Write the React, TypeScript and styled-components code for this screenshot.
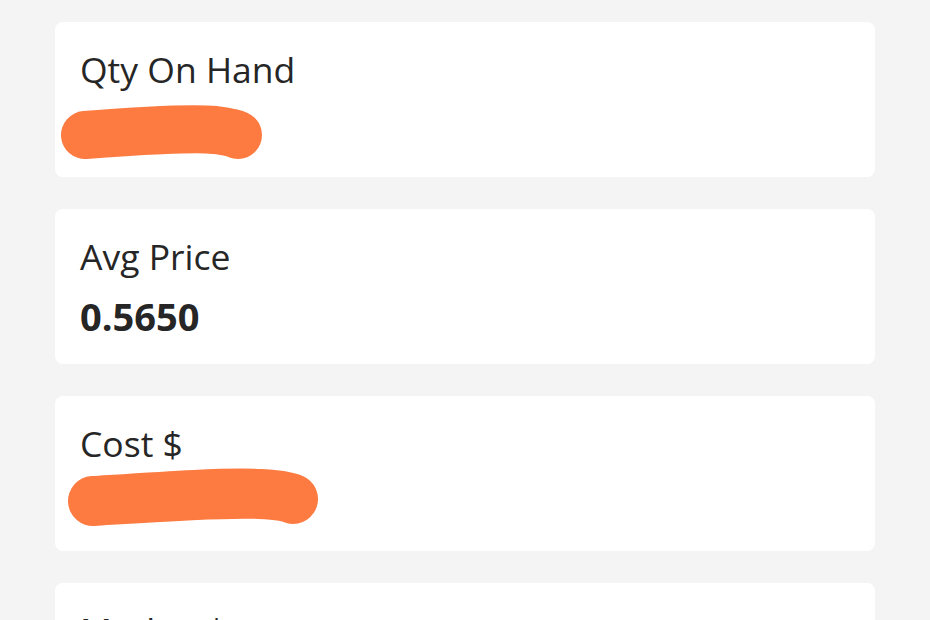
import React, { FC } from 'react';
import styled, { createGlobalStyle } from 'styled-components';

const GlobalStyle = createGlobalStyle`
    html, body {
        margin: 0;
        padding: 0;
        background: #f4f4f4;
    }
    body {
        font-family: 'Open Sans', 'Noto Sans', sans-serif;
        color: #262626;
    }
`;

const Page = styled.div`
    display: flex;
    flex-direction: column;
    gap: 32px;
    padding: 22px 55px 40px;
`;

const Card = styled.section`
    background: #ffffff;
    border-radius: 8px;
    height: 155px;
    box-sizing: border-box;
    padding: 27px 25px 24px;
`;

const Label = styled.div`
    font-size: 35.5px;
    line-height: 40px;
    font-weight: 400;
    color: #262626;
`;

const ValueRow = styled.div`
    margin-top: 16px;
    height: 48px;
    font-size: 38px;
    line-height: 48px;
    font-weight: 700;
    color: #262626;
`;

const Scribble = styled.svg<{ $top: number }>`
    display: block;
    margin-left: -25px;
    margin-top: ${({ $top }) => $top}px;
    overflow: visible;
`;

interface Mark {
    top: number;
    height: number;
    d: string;
    width: number;
}

const Redacted: FC<Mark> = ({ top, height, d, width }) => (
    <Scribble $top={top} width={260} height={height} viewBox={`0 0 260 ${height}`}>
        <path d={d} fill="none" stroke="#fd7a40" strokeWidth={width} strokeLinecap="round" strokeLinejoin="round" />
    </Scribble>
);

interface Stat {
    label: string;
    value?: string;
    mark?: Mark;
}

const stats: Stat[] = [
    { label: 'Qty On Hand', mark: { top: 0, height: 56, width: 48, d: 'M30 30 C 80 26, 140 23, 160 25 C 175 27, 182 29, 183 30' } },
    { label: 'Avg Price', value: '0.5650' },
    { label: 'Cost $', mark: { top: -10, height: 66, width: 50, d: 'M38 32 C 100 28, 170 23, 205 25 C 225 26, 235 28, 238 30' } },
    { label: 'Market $' },
];

const App: FC = () => (
    <>
        <GlobalStyle />
        <Page>
            {stats.map((s) => (
                <Card key={s.label}>
                    <Label>{s.label}</Label>
                    <ValueRow>{s.mark ? <Redacted {...s.mark} /> : s.value}</ValueRow>
                </Card>
            ))}
        </Page>
    </>
);

export default App;
